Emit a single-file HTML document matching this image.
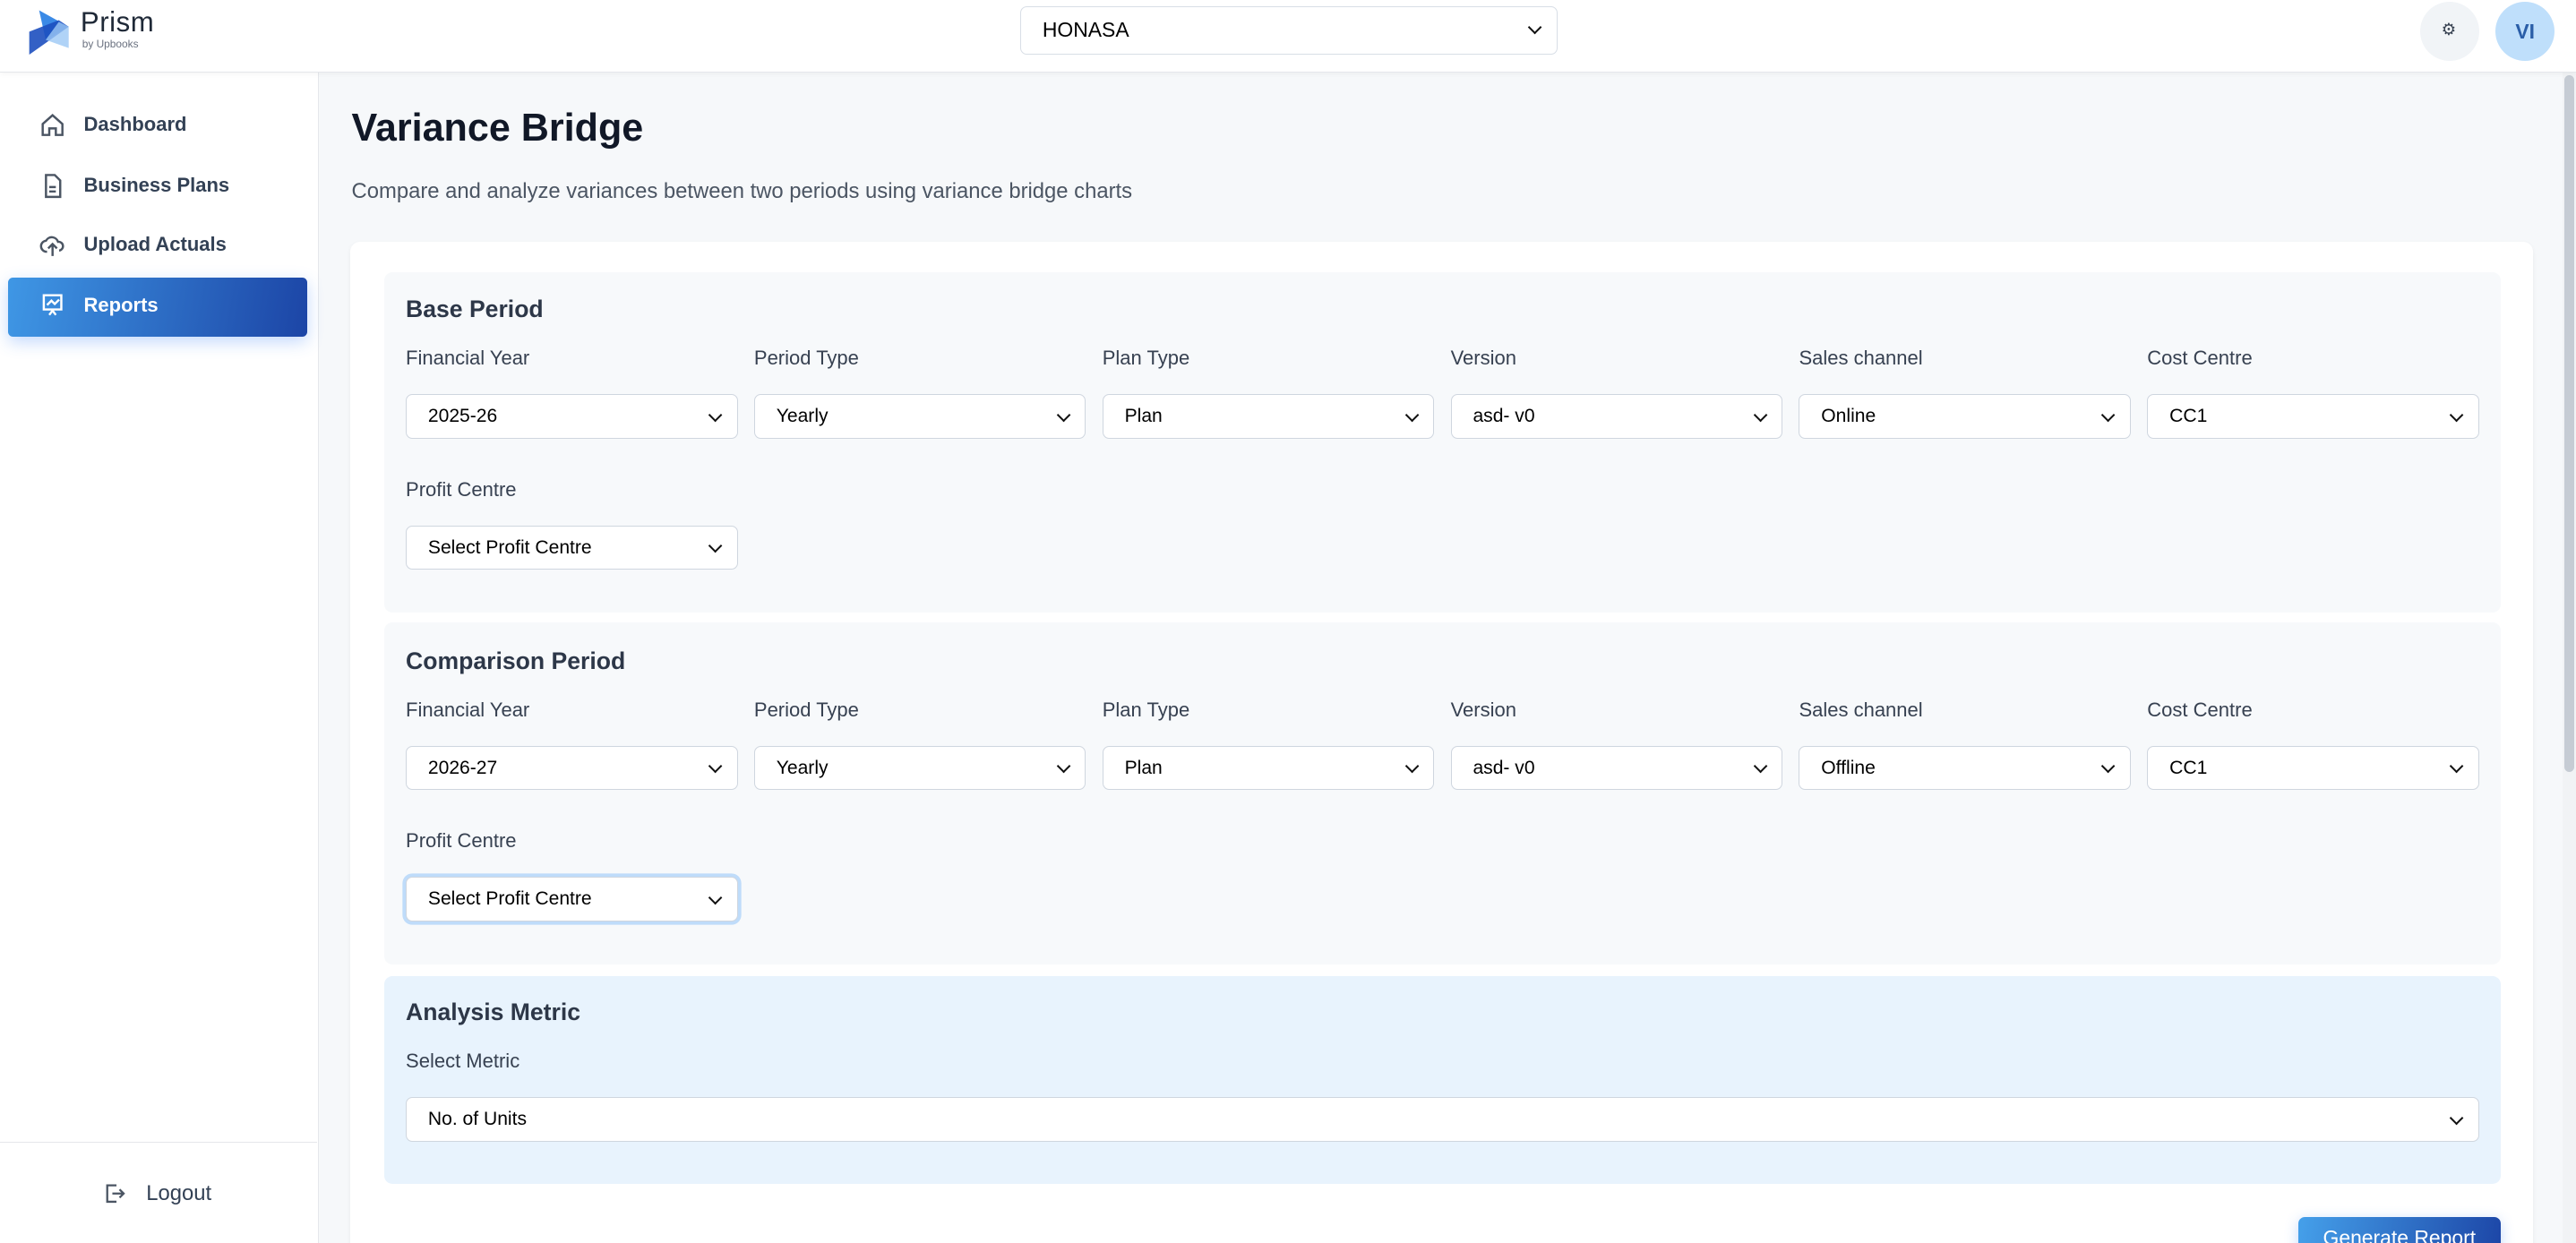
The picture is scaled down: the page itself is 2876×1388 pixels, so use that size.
<!DOCTYPE html>
<html><head><meta charset="utf-8"><style>
*{box-sizing:border-box;margin:0;padding:0}
html,body{width:2876px;height:1388px;overflow:hidden;background:#f6f8fa}
#r{zoom:1.8342;width:1568px;height:757px;position:relative;font-family:"Liberation Sans",sans-serif;color:#334155;overflow:hidden;background:#f6f8fa}
.a{position:absolute}
.hdr{left:0;top:0;width:1568px;height:44px;background:#fff;border-bottom:1px solid #e5e7eb;box-shadow:0 1px 3px rgba(0,0,0,.04);z-index:2}
.side{left:0;top:44px;width:194px;height:713px;background:#fff;border-right:1px solid #e5e7eb}
.nav{left:24px;font-size:12px;color:#334155;display:flex;align-items:center;gap:11px;font-weight:bold}
.nav svg{width:16px;height:16px}
.sel{position:absolute;height:27px;background:#fff;border:1px solid #cfd6df;border-radius:4px;font-size:11.5px;color:#000;padding-left:13px;line-height:26px}
.sel:after{content:"";position:absolute;right:10px;top:9px;width:5px;height:5px;border-right:1.3px solid #111;border-bottom:1.3px solid #111;transform:rotate(45deg)}
.lbl{position:absolute;font-size:12px;color:#374151}
.sec{position:absolute;left:234px;width:1288px;background:#f7f9fb;border-radius:5px}
.st{position:absolute;left:13px;font-size:14.5px;font-weight:bold;color:#2d3748}
</style></head><body><div id="r">
<div class="a hdr">
 <svg class="a" style="left:16px;top:3px" width="30" height="30" viewBox="0 0 30 30">
  <polygon points="8,3 26,13 12,21" fill="#3b8ae6"/>
  <polygon points="2,16 20,9 26,13 2,30" fill="#1d4fbf" opacity=".9"/>
  <polygon points="20,10 26,13 26,26 12,21" fill="#9cc8f5" opacity=".8"/>
 </svg>
 <div class="a" style="left:49px;top:4px;font-size:17px;color:#1f2937;letter-spacing:.3px">Prism</div>
 <div class="a" style="left:50px;top:23px;font-size:6.5px;color:#6b7280">by Upbooks</div>
 <div class="sel" style="left:621px;top:4px;width:327px;height:29px;line-height:28px;font-size:12.5px;border-color:#d8dee6">HONASA</div>
 <div class="a" style="left:1473px;top:1px;width:36px;height:36px;border-radius:50%;background:#f1f4f7"></div>
 <div class="a" style="left:1486px;top:12px;font-size:10px;color:#374151">⚙</div>
 <div class="a" style="left:1519px;top:1px;width:36px;height:36px;border-radius:50%;background:#bfdffb;color:#2a5ea8;font-weight:bold;font-size:12.5px;text-align:center;line-height:36px">VI</div>
</div>
<div class="a side">
 <div class="a" style="left:0;top:651px;width:193px;border-top:1px solid #e5e7eb"></div>
</div>
<div class="a nav" style="top:68px"><svg viewBox="0 0 24 24" fill="none" stroke="#4b5563" stroke-width="2"><path d="M3 11l9-8 9 8v10h-6v-6H9v6H3z"/></svg>Dashboard</div>
<div class="a nav" style="top:105px"><svg viewBox="0 0 24 24" fill="none" stroke="#4b5563" stroke-width="2"><path d="M6 2h8l5 5v15H6z M9 13h6 M9 17h6"/></svg>Business Plans</div>
<div class="a nav" style="top:141px"><svg viewBox="0 0 24 24" fill="none" stroke="#4b5563" stroke-width="2"><path d="M7 18a5 5 0 01-1-10 6 6 0 0111 1 4 4 0 011 8 M12 22V11 M8 15l4-4 4 4"/></svg>Upload Actuals</div>
<div class="a" style="left:5px;top:169px;width:182px;height:36px;border-radius:3px;background:linear-gradient(100deg,#3f97e5,#1c45a6);box-shadow:0 3px 10px rgba(59,130,246,.3)"></div>
<div class="a nav" style="top:178px;color:#fff"><svg viewBox="0 0 24 24" fill="none" stroke="#fff" stroke-width="2"><path d="M3 3h18 M4 3v13h16V3 M7 12l4-4 3 3 4-4 M9 21l3-4 3 4"/></svg>Reports</div>
<div class="a" style="left:62px;top:719px;font-size:13px;color:#334155;display:flex;gap:12px;align-items:center"><svg width="15" height="15" viewBox="0 0 24 24" fill="none" stroke="#4b5563" stroke-width="2"><path d="M14 4H5v16h9 M10 12h11 M17 8l4 4-4 4"/></svg>Logout</div>

<div class="a" style="left:214px;top:65px;font-size:23.5px;font-weight:bold;color:#111827">Variance Bridge</div>
<div class="a" style="left:214px;top:109px;font-size:13px;color:#4b5563">Compare and analyze variances between two periods using variance bridge charts</div>
<div class="a" style="left:213px;top:147px;width:1329px;height:640px;background:#fff;border-radius:6px;box-shadow:0 1px 3px rgba(0,0,0,.05)"></div>

<div class="sec" style="top:166px;height:207px"><div class="st" style="top:14px">Base Period</div></div>
<div class="sec" style="top:379px;height:208px"><div class="st" style="top:15px">Comparison Period</div></div>
<div class="sec" style="top:594px;height:127px;background:#e8f3fd"><div class="st" style="top:14px">Analysis Metric</div></div>

<div class="lbl" style="left:247px;top:211px">Financial Year</div><div class="lbl" style="left:459px;top:211px">Period Type</div><div class="lbl" style="left:671px;top:211px">Plan Type</div><div class="lbl" style="left:883px;top:211px">Version</div><div class="lbl" style="left:1095px;top:211px">Sales channel</div><div class="lbl" style="left:1307px;top:211px">Cost Centre</div>
<div class="sel" style="left:247px;top:240px;width:202px">2025-26</div><div class="sel" style="left:459px;top:240px;width:202px">Yearly</div><div class="sel" style="left:671px;top:240px;width:202px">Plan</div><div class="sel" style="left:883px;top:240px;width:202px">asd- v0</div><div class="sel" style="left:1095px;top:240px;width:202px">Online</div><div class="sel" style="left:1307px;top:240px;width:202px">CC1</div>
<div class="lbl" style="left:247px;top:291px">Profit Centre</div>
<div class="sel" style="left:247px;top:320px;width:202px">Select Profit Centre</div>

<div class="lbl" style="left:247px;top:425px">Financial Year</div><div class="lbl" style="left:459px;top:425px">Period Type</div><div class="lbl" style="left:671px;top:425px">Plan Type</div><div class="lbl" style="left:883px;top:425px">Version</div><div class="lbl" style="left:1095px;top:425px">Sales channel</div><div class="lbl" style="left:1307px;top:425px">Cost Centre</div>
<div class="sel" style="left:247px;top:454px;width:202px">2026-27</div><div class="sel" style="left:459px;top:454px;width:202px">Yearly</div><div class="sel" style="left:671px;top:454px;width:202px">Plan</div><div class="sel" style="left:883px;top:454px;width:202px">asd- v0</div><div class="sel" style="left:1095px;top:454px;width:202px">Offline</div><div class="sel" style="left:1307px;top:454px;width:202px">CC1</div>
<div class="lbl" style="left:247px;top:505px">Profit Centre</div>
<div class="sel" style="left:247px;top:534px;width:202px;box-shadow:0 0 0 2px #bfdcfa">Select Profit Centre</div>

<div class="lbl" style="left:247px;top:639px">Select Metric</div>
<div class="sel" style="left:247px;top:668px;width:1262px">No. of Units</div>

<div class="a" style="left:1399px;top:741px;width:123px;height:30px;border-radius:4px;background:linear-gradient(100deg,#45a0ea,#1c45a6);color:#fff;font-size:12.5px;text-align:center;line-height:26px;box-shadow:0 2px 8px rgba(59,130,246,.3)">Generate Report</div>

<div class="a" style="left:1560px;top:44px;width:8px;height:713px;background:#f1f3f5"></div>
<div class="a" style="left:1561px;top:46px;width:6px;height:424px;background:#c6ccd4;border-radius:3px"></div>
</div></body></html>
